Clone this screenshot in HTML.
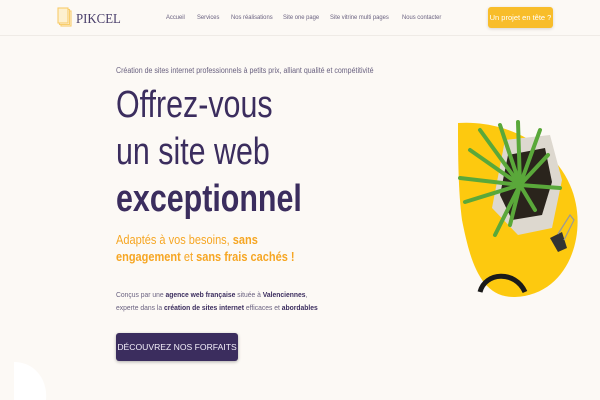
<!DOCTYPE html>
<html><head><meta charset="utf-8"><style>
*{margin:0;padding:0;box-sizing:border-box}
body{width:600px;height:400px;overflow:hidden;background:#fcf9f5;font-family:"Liberation Sans",sans-serif;position:relative;color:#3b2d5e}
.hdr{position:absolute;left:0;top:0;width:600px;height:36px;border-bottom:1px solid #efebe6;background:#fcf9f5}
.logo{position:absolute;left:76px;top:11px;font-family:"Liberation Serif",serif;font-size:13.5px;color:#4a3f6b;transform:scaleX(0.95);transform-origin:left}
.nav{position:absolute;top:14px;font-size:6.5px;color:#6a6280;white-space:nowrap;transform:scaleX(0.9);transform-origin:left}
.btn1{position:absolute;left:488px;top:7px;width:65px;height:21px;background:#f8bd2a;border-radius:3px;color:#fff;font-size:7.5px;text-align:center;line-height:21px;box-shadow:0 1px 3px rgba(0,0,0,.15);white-space:nowrap}
.abs{position:absolute;left:116px;white-space:nowrap;transform-origin:left top}
.h{font-size:38px;font-weight:300;color:#3b2d5e;transform:scaleX(0.8)}
.o{color:#f6a623;font-size:12.5px;line-height:17px;transform:scaleX(0.88)}
.p{font-size:7.5px;color:#6a6280;line-height:13px;transform:scaleX(0.9)}
.p b{color:#3b2d5e}
.cta{position:absolute;left:116px;top:333px;width:122px;height:28px;background:#3b2d5e;border-radius:3px;color:#f3effa;font-size:8.6px;line-height:28px;text-align:center;box-shadow:0 1px 3px rgba(0,0,0,.3);white-space:nowrap}
</style></head><body>
<div class="hdr">
<svg style="position:absolute;left:57px;top:6px" width="16" height="22" viewBox="0 0 16 22"><g fill="none" stroke="#f8cd6b" stroke-width="1.1"><rect x="4" y="5" width="10" height="15" fill="#fcf9f5"/><rect x="2.5" y="3.5" width="10" height="15" fill="#fcf9f5"/><rect x="1" y="2" width="10" height="15" fill="#fdf0cf"/></g></svg>
<div class="logo">PIKCEL</div>
<div class="nav" style="left:166px">Accueil</div>
<div class="nav" style="left:197px">Services</div>
<div class="nav" style="left:231px">Nos réalisations</div>
<div class="nav" style="left:283px">Site one page</div>
<div class="nav" style="left:330px">Site vitrine multi pages</div>
<div class="nav" style="left:402px">Nous contacter</div>
<div class="btn1">Un projet en tête ?</div>
</div>
<div class="abs" style="top:66px;font-size:8px;color:#6a6280;transform:scaleX(0.88)">Création de sites internet professionnels à petits prix, alliant qualité et compétitivité</div>
<div class="abs h" style="top:84px">Offrez-vous</div>
<div class="abs h" style="top:131px">un site web</div>
<div class="abs h" style="top:178px;font-weight:bold">exceptionnel</div>
<div class="abs o" style="top:232px">Adaptés à vos besoins, <b>sans</b><br><b>engagement</b> et <b>sans frais cachés !</b></div>
<div class="abs p" style="top:288px">Conçus par une <b>agence web française</b> située à <b>Valenciennes</b>,<br>experte dans la <b>création de sites internet</b> efficaces et <b>abordables</b></div>
<div class="cta">DÉCOUVREZ NOS FORFAITS</div>
<svg style="position:absolute;left:440px;top:110px" width="160" height="200" viewBox="0 0 160 200">
<path d="M18 13 C60 10 110 30 130 75 C150 120 130 185 75 187 C40 188 30 150 22 110 C18 80 18 40 18 13Z" fill="#fdc90f"/>
<path d="M65 30 L110 25 L122 70 L112 118 L78 125 L52 98Z" fill="#ddd8cf"/>
<path d="M68 45 L105 38 L112 72 L102 105 L72 110 L60 85Z" fill="#2a241c"/>
<g stroke="#5aa83a" stroke-width="4" stroke-linecap="round" fill="none">
<path d="M80 75 L40 20"/><path d="M80 75 L60 15"/><path d="M80 75 L78 12"/><path d="M80 75 L100 20"/><path d="M80 75 L108 45"/><path d="M80 75 L120 78"/><path d="M80 75 L20 68"/><path d="M80 75 L25 92"/><path d="M80 75 L55 125"/><path d="M80 75 L70 115"/><path d="M80 75 L30 40"/><path d="M80 75 L95 100"/>
</g>
<path d="M110 128 L122 122 L127 138 L118 142Z" fill="#333"/>
<path d="M118 124 L130 105 L134 110 L124 130" fill="none" stroke="#999" stroke-width="1.2"/>
<path d="M40 182 C45 162 75 160 85 182" fill="none" stroke="#1a1a1a" stroke-width="5"/>
</svg>
<svg style="position:absolute;left:0;top:360px" width="60" height="40"><path d="M14 2 C35 2 48 20 46 40 L14 40Z" fill="#fff"/></svg>
</body></html>
